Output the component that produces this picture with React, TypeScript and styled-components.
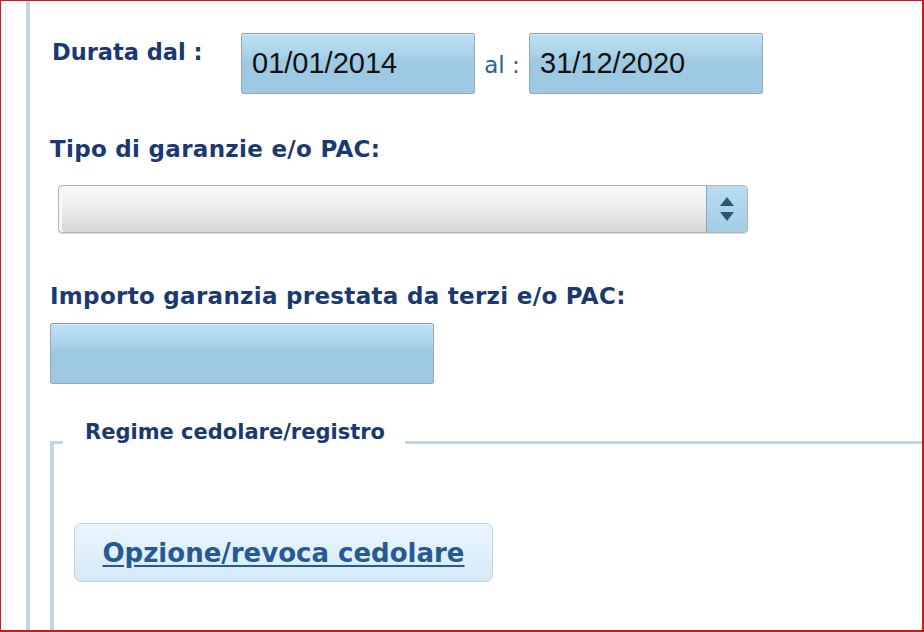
import React from 'react';
import styled, { createGlobalStyle } from 'styled-components';

const GlobalStyle = createGlobalStyle`
  html, body {
    margin: 0;
    padding: 0;
    background: #ffffff;
  }
  * {
    box-sizing: border-box;
  }
`;

const Frame = styled.div`
  width: 924px;
  height: 632px;
  border: 1px solid #d0161e;
  border-right-width: 2px;
  border-bottom-width: 2px;
  display: flex;
  overflow: hidden;
  background: #fff;
`;

const Gutter = styled.div`
  width: 21px;
  margin-left: 4px;
  border-left: 1px solid #ececec;
  flex-shrink: 0;
`;

const Rail = styled.div`
  flex: 1;
  border-left: 4px solid #c3d4ea;
  padding-left: 20px;
  padding-top: 32px;
  display: flex;
  flex-direction: column;
`;

const Row = styled.div`
  display: flex;
  align-items: flex-start;
`;

const Label = styled.div`
  font-family: "DejaVu Sans", Verdana, sans-serif;
  font-weight: bold;
  font-size: 23px;
  letter-spacing: 0.3px;
  color: #1a3972;
  line-height: 28px;
`;

const DurataLabel = styled(Label)`
  width: 191px;
  padding-top: 5px;
  padding-left: 2px;
  font-size: 22.5px;
  letter-spacing: 0;
`;

const TextBox = styled.div<{ $width: number }>`
  width: ${(p) => p.$width}px;
  height: 61px;
  border: 1px solid #9aa7b1;
  border-top-color: #8f9aa3;
  border-radius: 3px;
  background: linear-gradient(to bottom, #bfe1f3 0%, #a9d3ea 35%, #9dcae2 45%, #9dcae2 100%);
  font-family: "Liberation Sans", Arial, sans-serif;
  font-size: 29px;
  color: #111;
  padding-left: 10px;
  display: flex;
  align-items: center;
  box-shadow: inset 0 1px 0 #d4eefb;
`;

const Sep = styled.div`
  font-family: "DejaVu Sans", Verdana, sans-serif;
  font-size: 23px;
  color: #2f6193;
  width: 54px;
  text-align: center;
  padding-top: 19px;
`;

const Spaced = styled.div<{ $top: number }>`
  margin-top: ${(p) => p.$top}px;
`;

const Select = styled.div`
  width: 690px;
  height: 48px;
  margin-left: 8px;
  border: 1px solid #b3b3b3;
  border-radius: 4px;
  background: linear-gradient(to bottom, #fafafa 0%, #ececec 50%, #d6d6d6 100%);
  display: flex;
  justify-content: flex-end;
  overflow: hidden;
  box-shadow: inset 3px 0 0 #f7f7f7, 0 1px 1px rgba(0, 0, 0, 0.15);
`;

const SpinButton = styled.div`
  width: 41px;
  height: 100%;
  border-left: 1px solid #7fa9c4;
  background: linear-gradient(to bottom, #b9dcf0 0%, #a3cde5 100%);
  display: flex;
  flex-direction: column;
  align-items: center;
  justify-content: center;
  gap: 4px;
`;

const Fieldset = styled.fieldset`
  margin: 36px 0 0 0;
  padding: 0 0 0 20px;
  border: none;
  border-left: 4px solid #c3d4ea;
  border-top: 3px solid #c3d4ea;
  flex: 1;
  min-width: 0;
`;

const Legend = styled.legend`
  margin-left: -11px;
  padding: 0 20px 20px 22px;
  font-family: "DejaVu Sans", Verdana, sans-serif;
  font-weight: bold;
  font-size: 21px;
  line-height: 24px;
  color: #1a3972;
`;

const LinkButton = styled.a`
  display: inline-flex;
  align-items: center;
  justify-content: center;
  margin-top: 59px;
  width: 419px;
  height: 59px;
  border: 1px solid #bcd5e8;
  border-radius: 7px;
  background: linear-gradient(to bottom, #e9f5fd 0%, #e1f0fb 50%, #d4e9f7 100%);
  font-family: "DejaVu Sans", Verdana, sans-serif;
  font-weight: bold;
  font-size: 26px;
  color: #275a93;
  text-decoration: underline;
  text-underline-offset: 3px;
  cursor: pointer;
`;

const Arrow = ({ up }: { up?: boolean }) => (
  <svg width="16" height="11" viewBox="0 0 16 11">
    <path d={up ? 'M8 1 L15 10 L1 10 Z' : 'M1 1 L15 1 L8 10 Z'} fill="#2b5877" />
  </svg>
);

export default function App() {
  return (
    <>
      <GlobalStyle />
      <Frame>
        <Gutter />
        <Rail>
          <Row>
            <DurataLabel>Durata dal :</DurataLabel>
            <TextBox $width={234}>01/01/2014</TextBox>
            <Sep>al :</Sep>
            <TextBox $width={234}>31/12/2020</TextBox>
          </Row>
          <Spaced $top={41}>
            <Label>Tipo di garanzie e/o PAC:</Label>
          </Spaced>
          <Spaced $top={22}>
            <Select>
              <SpinButton>
                <Arrow up />
                <Arrow />
              </SpinButton>
            </Select>
          </Spaced>
          <Spaced $top={49}>
            <Label>Importo garanzia prestata da terzi e/o PAC:</Label>
          </Spaced>
          <Spaced $top={13}>
            <TextBox $width={384} />
          </Spaced>
          <Fieldset>
            <Legend>Regime cedolare/registro</Legend>
            <LinkButton>Opzione/revoca cedolare</LinkButton>
          </Fieldset>
        </Rail>
      </Frame>
    </>
  );
}
